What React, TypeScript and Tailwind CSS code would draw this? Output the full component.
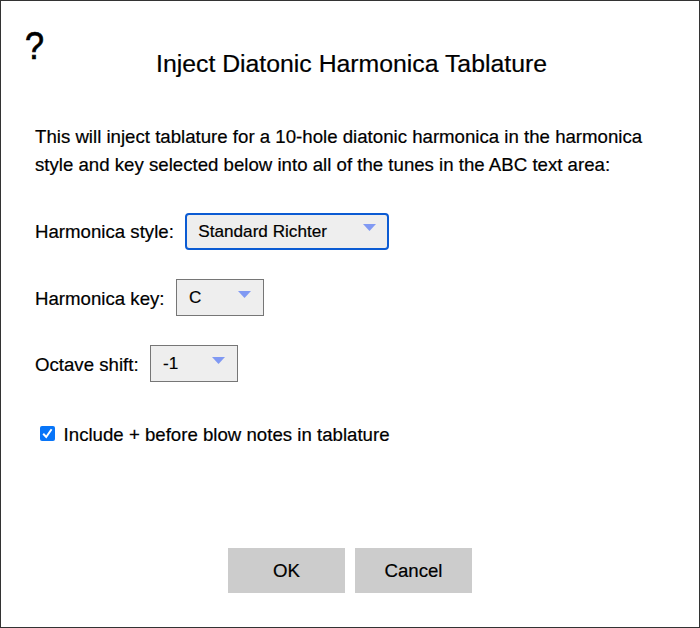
import type { ReactNode } from "react";

function Select({ label, value, className }: { label: string; value: string; className: string }) {
  return (
    <div className="flex h-[38px] items-center">
      <span className="whitespace-nowrap pt-[2.5px]">{label}</span>
      <button className={`flex h-[37px] items-center justify-between bg-[#eeeeee] text-[17.15px] text-black ${className}`}>
        <span className="pt-[1.5px]">{value}</span>
        <svg className="mb-[6.5px] h-[7px] w-[13px]" viewBox="0 0 13 7"><path d="M0 0h13L6.5 7z" fill="#8099f3" /></svg>
      </button>
    </div>
  );
}

function Action({ children }: { children: ReactNode }) {
  return <button className="h-[45px] w-[117px] bg-[#cccccc] pt-[2px] text-[18.65px]">{children}</button>;
}

export default function App() {
  return (
    <main className="flex h-[628px] w-[700px] flex-col border border-[#333] bg-white px-[34px] font-['Liberation_Sans',Arial,sans-serif] text-[18.65px] text-black [-webkit-text-stroke:0.2px_black]">
      <header className="flex h-[94px] items-start">
        <div className="-ml-[10px] w-[20px] pt-[23px] text-[38px] leading-[44px]"><span className="inline-block origin-left scale-x-[0.9] [-webkit-text-stroke:0.7px_black]">?</span></div>
        <h1 className="ml-[111px] whitespace-nowrap pt-[47px] text-[24.8px] leading-[32px]">Inject Diatonic Harmonica Tablature</h1>
      </header>
      <p className="mt-[28px] whitespace-nowrap leading-[28px]">
        This will inject tablature for a 10-hole diatonic harmonica in the harmonica<br />
        style and key selected below into all of the tunes in the ABC text area:
      </p>
      <div className="mt-[33px] flex flex-col gap-[28.3px]">
        <Select label="Harmonica style:" value="Standard Richter" className="ml-[11.5px] w-[204px] rounded-[4px] border-2 border-[#0b5bd3] pl-[11px] pr-[11px]" />
        <Select label="Harmonica key:" value="C" className="ml-[11.5px] w-[87.5px] border border-[#767676] px-3" />
        <Select label="Octave shift:" value="-1" className="ml-[11.5px] w-[87.5px] border border-[#767676] px-3" />
      </div>
      <label className="mt-[40.4px] flex h-[22px] items-center pl-[4.6px]">
        <svg className="mr-[9px] h-[15px] w-[15px]" viewBox="0 0 15 15"><rect width="15" height="15" rx="2" fill="#0875f8" /><path d="m3.2 7.8 3 3.2 5.4-7.8" fill="none" stroke="white" strokeWidth="2" /></svg>
        <span className="whitespace-nowrap pt-[2px]">Include + before blow notes in tablature</span>
      </label>
      <footer className="mt-[103px] flex justify-center gap-[10px]"><Action>OK</Action><Action>Cancel</Action></footer>
    </main>
  );
}
